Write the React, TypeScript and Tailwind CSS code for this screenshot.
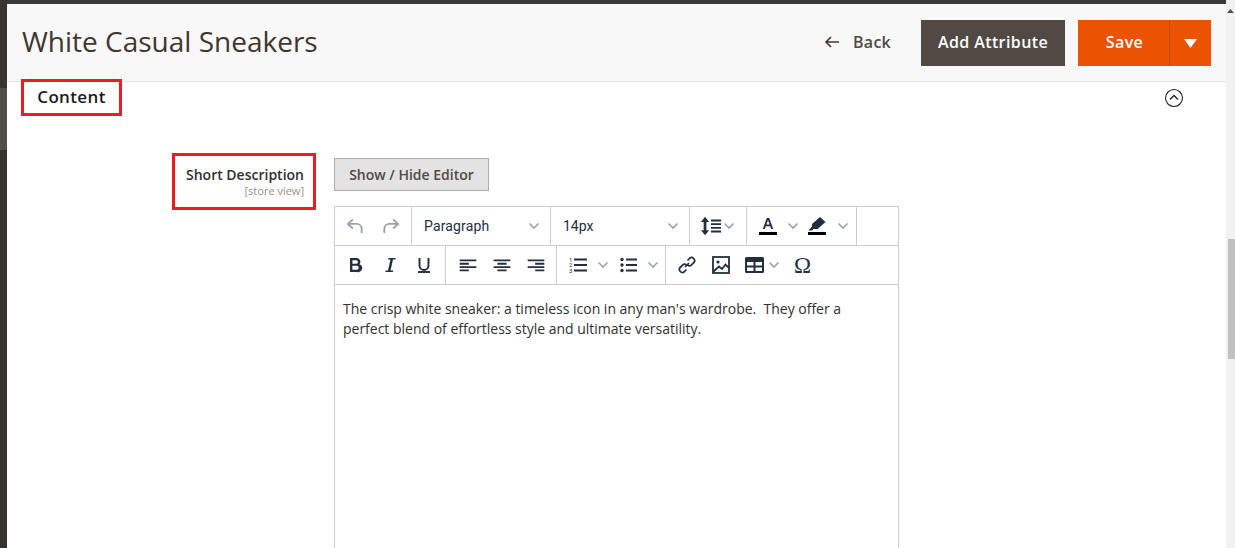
import React from "react";

const Chev = ({ className = "" }: { className?: string }) => (
  <svg width="12" height="8" viewBox="0 0 12 8" className={className} fill="none" stroke="#9ca3a8" strokeWidth="1.6">
    <path d="M1.5 1.5 L6 6 L10.5 1.5" />
  </svg>
);

const I = ({ children, w = 20, h = 20, vb }: { children: React.ReactNode; w?: number; h?: number; vb?: string }) => (
  <svg width={w} height={h} viewBox={vb ?? "0 0 24 24"} fill="#222f3e">{children}</svg>
);

const Undo = ({ fill }: { fill: string }) => (
  <svg width="20" height="20" viewBox="0 0 24 24" fill="none" stroke={fill} strokeWidth="2.2">
    <path d="M9.5 4 L3.500 9.500 L9.500 15" />
    <path d="M4 9.500 H14 A6 6 0 0 1 20 15.500 V20.500" />
  </svg>
);

const Redo = ({ fill }: { fill: string }) => (
  <svg width="20" height="20" viewBox="0 0 24 24" fill="none" stroke={fill} strokeWidth="2.2">
    <path d="M14.500 4 L20.500 9.500 L14.500 15" />
    <path d="M20 9.500 H10 A6 6 0 0 0 4 15.500 V20.500" />
  </svg>
);

const Align = ({ kind }: { kind: "l" | "c" | "r" }) => {
  const short = kind === "l" ? "M2 10.500h11M2 18.500h11" : kind === "c" ? "M6.500 10.500h11M6.500 18.500h11" : "M11 10.500h11M11 18.500h11";
  return (
    <svg width="20" height="20" viewBox="0 0 24 24" fill="none" stroke="#222f3e" strokeWidth="2.2">
      <path d="M2 6.500h20M2 14.500h20" />
      <path d={short} />
    </svg>
  );
};

export default function App() {
  return (
    <div className="flex h-[548px] w-[1235px] overflow-hidden bg-white font-['Open_Sans',sans-serif] text-[#41362f]">
      {/* Dark admin menu edge */}
      <div className="flex w-[7px] shrink-0 flex-col bg-[#373330]">
        <div className="mt-[88px] h-[62px] bg-[#524d49]" />
      </div>

      <div className="flex min-h-0 min-w-0 flex-1 flex-col">
        <div className="h-1 shrink-0 bg-[#3a3a3a]" />
        {/* Page header */}
        <header className="flex h-[78px] shrink-0 items-center border-b border-[#e3e3e3] bg-[#f8f8f8] pl-[15px] pr-[15px]">
          <h1 className="mb-[3px] text-[28px] font-normal leading-none text-[#41362f]">White Casual Sneakers</h1>
          <div className="ml-auto flex items-center">
            <button className="mr-[30px] flex items-center pb-[2px] text-base font-semibold tracking-[0.25px] text-[#514943]">
              <svg width="16" height="14" viewBox="0 0 16 14" fill="none" stroke="#41362f" strokeWidth="1.6" className="mr-[13px] -ml-[1px]">
                <path d="M7 2 L2 7 L7 12 M2 7 H15" />
              </svg>
              Back
            </button>
            <button className="mr-[13px] h-[46px] w-[144px] bg-[#514943] pb-[2px] text-base font-semibold tracking-[0.4px] text-white">Add Attribute</button>
            <div className="flex h-[46px] w-[133px] bg-[#eb5202] text-white">
              <button className="w-[92px] border-r border-[#c9460a] pb-[2px] pl-[2px] text-base font-semibold tracking-[0.4px]">Save</button>
              <button className="flex flex-1 items-center justify-center pt-[2px]">
                <svg width="13" height="9" viewBox="0 0 13 9" fill="#fff"><path d="M0 0h13L6.500 9z" /></svg>
              </button>
            </div>
          </div>
        </header>

        {/* Section title */}
        <div className="flex h-[71px] shrink-0 items-start pl-[14px] pr-[42px]">
          <div className="-mt-[3px] flex h-[37px] w-[101px] items-center justify-center border-[3px] border-[#ed1c24] pb-[2px] text-[17px] font-semibold leading-none tracking-[0.35px] text-[#1a1a1a]">
            Content
          </div>
          <svg width="20" height="20" viewBox="0 0 20 20" fill="none" stroke="#222" strokeWidth="1.1" className="ml-auto mt-[6px]">
            <circle cx="10" cy="10" r="8.500" />
            <path d="M6 11.500 L10 7.500 L14 11.500" strokeWidth="1.400" />
          </svg>
        </div>

        {/* Field row */}
        <div className="flex min-h-0 flex-1 items-start pl-[165px]">
          <div className="flex h-[57px] w-[144px] flex-col items-end justify-center border-[3px] border-[#ed1c24] pr-[9px]">
            <span className="text-sm font-semibold leading-[18px] text-[#303030]">Short Description</span>
            <span className="text-[11px] leading-[13px] text-[#9a8f87]">[store view]</span>
          </div>
          <div className="ml-[18px] mt-[5px] flex w-[565px] flex-col">
            <button className="h-[33px] w-[155px] border border-[#adadad] bg-[#e3e3e3] text-sm font-semibold text-[#514943]">Show / Hide Editor</button>
            <div className="mt-[15px] flex h-[400px] flex-col border border-b-0 border-[#cccccc] font-['Roboto',sans-serif] text-[14px] text-[#222f3e]">
              {/* Toolbar row 1 */}
              <div className="flex h-[39px] shrink-0 border-b border-[#cccccc]">
                <div className="flex w-[77px] items-center gap-4 border-r border-[#cccccc] pl-[10px]">
                  <Undo fill="#9aa1a8" />
                  <Redo fill="#9aa1a8" />
                </div>
                <div className="flex w-[139px] items-center justify-between border-r border-[#cccccc] pl-[12px] pr-[10px]">
                  <span className="tracking-[0.15px]">Paragraph</span>
                  <Chev />
                </div>
                <div className="flex w-[139px] items-center justify-between border-r border-[#cccccc] pl-[12px] pr-[10px]">
                  <span>14px</span>
                  <Chev />
                </div>
                <div className="flex w-[57px] items-center border-r border-[#cccccc] pl-[10px]">
                  <I w={22} h={22}>
                    <path d="M5.500 2 L10 7.500 H7V16.500H10L5.500 22 1 16.500H4V7.500H1z" />
                    <path d="M12 5h11v2H12zM12 9h11v2H12zM12 13h11v2H12zM12 17h11v2H12z" />
                  </I>
                  <Chev className="ml-[1px]" />
                </div>
                <div className="flex w-[110px] items-center border-r border-[#cccccc] pl-[11px]">
                  <svg width="20" height="20" viewBox="0 0 20 20" fill="#222f3e">
                    <path d="M8.800 2h2.400l4 11h-2l-1-2.800H7.800l-1 2.800h-2zM8.400 8.600h3.200L10 4.200z" />
                    <rect x="1" y="16" width="18" height="3" fill="#000" />
                  </svg>
                  <Chev className="ml-[9px]" />
                  <svg width="20" height="20" viewBox="0 0 20 20" fill="#222f3e" className="ml-[8px]">
                    <path d="M13 1 L18.500 6 L10.500 13 H6.500 L5 14.500 H1.500 L5 10.500 V8z" />
                    <rect x="1" y="16" width="18" height="3" fill="#000" />
                  </svg>
                  <Chev className="ml-[10px]" />
                </div>
              </div>

              {/* Toolbar row 2 */}
              <div className="flex h-[39px] shrink-0 border-b border-[#cccccc]">
                <div className="flex w-[111px] items-center border-r border-[#cccccc] pl-[14px]">
                  <svg width="14" height="16" viewBox="0 0 14 16" fill="#222f3e">
                    <path fillRule="evenodd" d="M1 1h6.500a3.800 3.800 0 0 1 2.900 6.300 A4 4 0 0 1 8 15H1zM3.400 3.200v3.500h3.800a1.750 1.750 0 0 0 0-3.500zM3.400 8.800v4h4.300a2 2 0 0 0 0-4z" />
                  </svg>
                  <svg width="12" height="16" viewBox="0 0 12 16" fill="#222f3e" className="ml-[21px]">
                    <path d="M4.500 1h7v1.400H9L6.500 13.600H9V15H1.500v-1.400H4L6.500 2.400H4z" />
                  </svg>
                  <svg width="14" height="16" viewBox="0 0 14 16" fill="none" stroke="#222f3e" strokeWidth="1.900" className="ml-[21px]">
                    <path d="M2.500 1v7.500a4.500 4.500 0 0 0 9 0V1" />
                    <path d="M1 15h12" />
                  </svg>
                </div>
                <div className="flex w-[111px] items-center gap-[14px] border-r border-[#cccccc] pl-[12px]">
                  <Align kind="l" />
                  <Align kind="c" />
                  <Align kind="r" />
                </div>
                <div className="flex w-[109px] items-center border-r border-[#cccccc] pl-[12px]">
                  <svg width="18" height="20" viewBox="0 0 18 20" fill="#222f3e">
                    <path d="M5 3.500h13v2H5zM5 9h13v2H5zM5 14.500h13v2H5z" />
                    <text x="0" y="6.500" fontSize="6" fontFamily="Roboto">1</text>
                    <text x="0" y="12" fontSize="6" fontFamily="Roboto">2</text>
                    <text x="0" y="18" fontSize="6" fontFamily="Roboto">3</text>
                  </svg>
                  <Chev className="ml-[10px]" />
                  <svg width="18" height="20" viewBox="0 0 18 20" className="ml-[11px]" fill="#222f3e">
                    <circle cx="2" cy="4.500" r="1.700" />
                    <circle cx="2" cy="10" r="1.700" />
                    <circle cx="2" cy="15.500" r="1.700" />
                    <path d="M6 3.500h11v2H6zM6 9h11v2H6zM6 14.500h11v2H6z" />
                  </svg>
                  <Chev className="ml-[9px]" />
                </div>
                <div className="flex flex-1 items-center pl-[11px]">
                  <svg width="20" height="20" viewBox="0 0 20 20" fill="none" stroke="#222f3e" strokeWidth="1.700">
                    <path d="M8 12 L12 8" />
                    <path d="M10.500 5.500 L12.800 3.200 A3 3 0 0 1 17 7.400 L14.500 9.900 A3 3 0 0 1 10.500 10" />
                    <path d="M9.500 14.500 L7.200 16.800 A3 3 0 0 1 3 12.600 L5.500 10.100 A3 3 0 0 1 9.500 10" />
                  </svg>
                  <svg width="20" height="20" viewBox="0 0 20 20" fill="none" stroke="#222f3e" strokeWidth="1.800" className="ml-[14px]">
                    <rect x="2" y="2" width="16" height="16" />
                    <circle cx="7" cy="7" r="1.600" fill="#222f3e" stroke="none" />
                    <path d="M2.500 16.500 L8 11.500 L11 14 L14.500 9.500 L18 13" />
                  </svg>
                  <svg width="19" height="16" viewBox="0 0 19 16" fill="#222f3e" className="ml-[14px]">
                    <path fillRule="evenodd" d="M1.500 0h16A1.500 1.500 0 0 1 19 1.500v13a1.500 1.500 0 0 1-1.500 1.500h-16A1.500 1.500 0 0 1 0 14.500v-13A1.500 1.500 0 0 1 1.500 0zM2 5v3.500h6.500V5zM10.500 5v3.500H17V5zM2 10.500V14h6.500v-3.500zM10.500 10.500V14H17v-3.500z" />
                  </svg>
                  <Chev className="ml-[4px]" />
                  <span className="ml-[14px] font-['Liberation_Serif',serif] text-[23px] leading-none">Ω</span>
                </div>
              </div>

              {/* Body */}
              <div className="flex-1 px-2 pt-[14px] font-['Open_Sans',sans-serif] text-sm leading-5 tracking-[-0.01px] text-[#303030]">
                <p className="whitespace-pre-wrap">The crisp white sneaker: a timeless icon in any man's wardrobe.  They offer a<br />perfect blend of effortless style and ultimate versatility.</p>
              </div>
            </div>
          </div>
        </div>
      </div>

      {/* Scrollbar */}
      <div className="flex w-[9px] shrink-0 flex-col items-end bg-[#f1f1f1]">
        <svg width="9" height="8" viewBox="0 0 9 8" className="mt-[8px]" fill="#505050"><path d="M4.500 1 L8 5 H1z" /></svg>
        <div className="mt-[223px] h-[120px] w-[7px] bg-[#c1c1c1]" />
      </div>
    </div>
  );
}
